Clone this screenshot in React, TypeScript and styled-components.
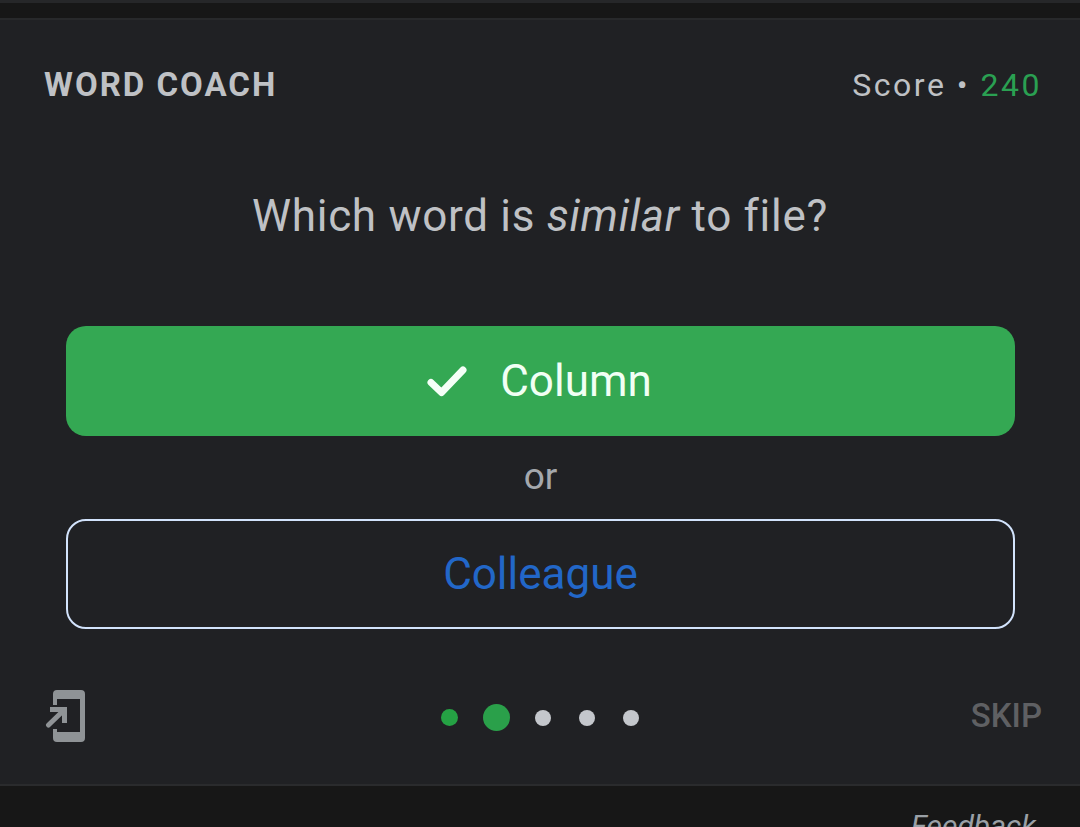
import React from "react";
import styled, { createGlobalStyle } from "styled-components";

const Global = createGlobalStyle`
  html, body { margin: 0; padding: 0; background: #171717; }
  body { font-family: Roboto, "Liberation Sans", sans-serif; }
`;

const Page = styled.div`
  width: 1080px;
  height: 827px;
  overflow: hidden;
  display: flex;
  flex-direction: column;
  background: #171717;
`;

const TopStrip = styled.div`
  height: 18px;
  flex: none;
  border-top: 3px solid #262729;
  box-sizing: border-box;
  background: #171717;
`;

const Card = styled.section`
  height: 768px;
  flex: none;
  box-sizing: border-box;
  background: #202124;
  border-top: 2px solid #28292b;
  border-bottom: 2px solid #2a2b2d;
  display: flex;
  flex-direction: column;
`;

const Header = styled.header`
  height: 131px;
  flex: none;
  box-sizing: border-box;
  padding: 45px 38px 0 44px;
  display: flex;
  justify-content: space-between;
  align-items: flex-start;
`;

const Title = styled.h2`
  margin: 0;
  font-size: 33px;
  line-height: 40px;
  font-weight: 700;
  letter-spacing: 2px;
  color: #bfc1c5;
`;

const Score = styled.div`
  font-size: 32px;
  line-height: 40px;
  letter-spacing: 2.5px;
  color: #bfc1c5;
`;

const ScoreValue = styled.span`
  color: #2aa052;
`;

const Question = styled.p`
  margin: 0;
  height: 175px;
  flex: none;
  box-sizing: border-box;
  padding-top: 39px;
  text-align: center;
  font-size: 44px;
  line-height: 52px;
  letter-spacing: 0.7px;
  color: #bfc1c5;
  em { font-style: italic; }
`;

const Answers = styled.div`
  flex: none;
  padding: 0 65px 0 66px;
  display: flex;
  flex-direction: column;
`;

const AnswerButton = styled.button<{ $correct?: boolean }>`
  height: 110px;
  box-sizing: border-box;
  border-radius: 20px;
  display: flex;
  align-items: center;
  justify-content: center;
  gap: 31px;
  font-family: inherit;
  font-size: 44px;
  padding: 0 ${(p) => (p.$correct ? "2px" : "0")} 0 0;
  background: ${(p) => (p.$correct ? "#34a853" : "transparent")};
  border: ${(p) => (p.$correct ? "none" : "2px solid #d2e3fc")};
  color: ${(p) => (p.$correct ? "#f1fff4" : "#2267c8")};
`;

const Or = styled.div`
  height: 83px;
  line-height: 81px;
  text-align: center;
  font-size: 37px;
  color: #a4a8ad;
`;

const Footer = styled.footer`
  flex: 1;
  position: relative;
  display: flex;
  align-items: flex-start;
  justify-content: space-between;
  padding: 59px 38px 0 45px;
`;

const ExitButton = styled.div`
  width: 42px;
  height: 54px;
  display: flex;
`;

const Dots = styled.div`
  position: absolute;
  left: 441px;
  top: 75px;
  display: flex;
  align-items: center;
`;

const Dot = styled.span<{ $size: number; $color: string; $gap: number }>`
  width: ${(p) => p.$size}px;
  height: ${(p) => p.$size}px;
  border-radius: 50%;
  background: ${(p) => p.$color};
  margin-right: ${(p) => p.$gap}px;
  flex: none;
`;

const Skip = styled.div`
  font-size: 33px;
  line-height: 40px;
  font-weight: 500;
  color: #5f6063;
  margin-top: 8px;
`;

const Bottom = styled.div`
  flex: 1;
  position: relative;
  display: flex;
  justify-content: flex-end;
  padding: 22px 44px 0 0;
`;

const Feedback = styled.span`
  font-size: 30px;
  line-height: 36px;
  font-style: italic;
  color: #9aa0a6;
`;

const dots = [
  { size: 17, color: "#25a244", gap: 25 },
  { size: 27, color: "#2aa04a", gap: 25 },
  { size: 16, color: "#c4c7cc", gap: 28 },
  { size: 16, color: "#c4c7cc", gap: 28 },
  { size: 16, color: "#c4c7cc", gap: 0 },
];

export default function App() {
  return (
    <Page>
      <Global />
      <TopStrip />
      <Card>
        <Header>
          <Title>WORD COACH</Title>
          <Score>
            Score • <ScoreValue>240</ScoreValue>
          </Score>
        </Header>
        <Question>
          Which word is <em>similar</em> to file?
        </Question>
        <Answers>
          <AnswerButton $correct>
            <svg width="42" height="34" viewBox="0 0 42 34" fill="none" aria-hidden="true">
              <path d="M4 18.5 L14.5 28.5 L36 6" stroke="#f5fff7" strokeWidth="7" strokeLinecap="round" strokeLinejoin="round" />
            </svg>
            Column
          </AnswerButton>
          <Or>or</Or>
          <AnswerButton>Colleague</AnswerButton>
        </Answers>
        <Footer>
          <ExitButton>
            <svg width="42" height="54" viewBox="0 0 42 54" fill="none" aria-hidden="true">
              <path d="M8 6 A4 4 0 0 1 12 2 H36 A4 4 0 0 1 40 6 V50 A4 4 0 0 1 36 54 H12 A4 4 0 0 1 8 50 V41 H12 V44 H35 V11 H12 V17 H8 Z" fill="#8f9396" />
              <path d="M3.5 37 L18 23" stroke="#8f9396" strokeWidth="5" strokeLinecap="round" />
              <path d="M5 21.5 H19.5 V35" stroke="#8f9396" strokeWidth="5" />
            </svg>
          </ExitButton>
          <Dots>
            {dots.map((d, i) => (
              <Dot key={i} $size={d.size} $color={d.color} $gap={d.gap} />
            ))}
          </Dots>
          <Skip>SKIP</Skip>
        </Footer>
      </Card>
      <Bottom>
        <Feedback>Feedback</Feedback>
      </Bottom>
    </Page>
  );
}
